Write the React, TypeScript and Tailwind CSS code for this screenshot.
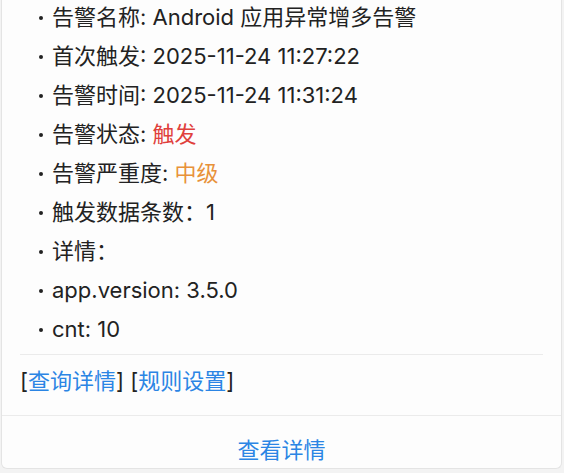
const font = { fontFamily: 'Inter, "Noto Sans CJK SC", sans-serif' };

type Item = { label: string; value?: string; tone?: 'red' | 'orange' };

const items: Item[] = [
  { label: '告警名称: ', value: 'Android 应用异常增多告警' },
  { label: '首次触发: ', value: '2025-11-24 11:27:22' },
  { label: '告警时间: ', value: '2025-11-24 11:31:24' },
  { label: '告警状态: ', value: '触发', tone: 'red' },
  { label: '告警严重度: ', value: '中级', tone: 'orange' },
  { label: '触发数据条数：', value: '1' },
  { label: '详情：' },
  { label: 'app.version: ', value: '3.5.0' },
  { label: 'cnt: ', value: '10' },
];

function Row({ item }: { item: Item }) {
  const tone =
    item.tone === 'red' ? 'text-[#e0403c]' : item.tone === 'orange' ? 'text-[#e8923a]' : '';
  return (
    <li className="flex h-[39px] items-center">
      <span className="ml-[19px] mr-[9px] h-[4px] w-[4px] shrink-0 rounded-full bg-[#222]" />
      <span className="whitespace-pre">
        {item.label}
        {item.value && <span className={tone}>{item.value}</span>}
      </span>
    </li>
  );
}

export default function App() {
  return (
    <div className="h-[473px] overflow-hidden bg-[#f3f3f3] pl-[1px] pr-[2px]" style={font}>
      <div className="h-[471px] rounded-b-[6px] border-x border-b border-[#e4e4e4] bg-[#fdfdfd] text-[22px] text-[#222]">
        <div className="px-[18px]">
          <ul className="-mt-[2px] pb-[5px]">
            {items.map((it) => (
              <Row key={it.label} item={it} />
            ))}
          </ul>
          <div className="h-px bg-[#ebebeb]" />
          <div className="h-[60px] pt-[12px] leading-[28px]">
            [<span className="text-[#2b85e4]">查询详情</span>] [
            <span className="text-[#2b85e4]">规则设置</span>]
          </div>
        </div>
        <div className="h-px bg-[#ebebeb]" />
        <div className="pt-[20px] text-center leading-[28px] text-[#2b85e4]">查看详情</div>
      </div>
    </div>
  );
}
